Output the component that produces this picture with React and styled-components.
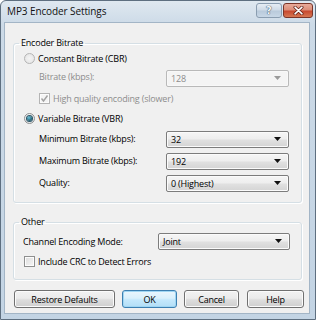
import React from 'react';
import styled, { createGlobalStyle, css } from 'styled-components';

const Global = createGlobalStyle`
  html, body { margin: 0; padding: 0; }
  body {
    width: 316px; height: 320px; overflow: hidden;
    font-family: "Open Sans", "Noto Sans", sans-serif;
    font-size: 9px; letter-spacing: -0.2px; color: #000;
  }
`;

const Window = styled.div`
  width: 316px; height: 320px; box-sizing: border-box;
  display: flex; flex-direction: column;
  background: linear-gradient(#dfe8f0, #ccdae7 24px, #c3d4e4 100%);
  border: 1px solid #5e6f80;
  border-radius: 6px 6px 0 0;
`;

const TitleBar = styled.div`
  height: 22px; display: flex; align-items: flex-start;
  padding-left: 6px;
`;

const TitleText = styled.div`
  font-size: 10px; letter-spacing: -0.1px; line-height: 21px; color: #111;
`;

const Controls = styled.div`
  margin-left: auto; margin-top: 2px; margin-right: 2px;
  display: flex; gap: 1px;
`;

const CapButton = styled.div`
  height: 15px; box-sizing: border-box; border-radius: 3px;
  display: flex; align-items: center; justify-content: center;
  ${p => p.$close ? css`
    width: 30px;
    border: 1px solid #7a3528;
    background: linear-gradient(#e9ab9a, #dc8e79 45%, #c7492f 55%, #d67752);
  ` : css`
    width: 26px;
    border: 1px solid #8a9db0;
    background: linear-gradient(#e6edf4, #cfdbe7 45%, #b9cadb 55%, #c8d7e6);
  `}
`;

const HelpGlyph = styled.span`
  font-family: "DejaVu Sans", sans-serif; font-weight: bold; font-size: 10px;
  color: #f4f7fa; text-shadow: 0 0 1px #34485c, 0 0 1px #34485c;
  line-height: 1; letter-spacing: 0;
`;

const Client = styled.div`
  flex: 1; margin: 0 6px 6px 4px;
  background: #f0f0f0;
  display: flex; flex-direction: column;
  box-shadow: 0 0 0 1px #a3b5c6;
`;

const Group = styled.fieldset`
  margin: ${p => p.$top}px 7px 0 8px;
  padding: ${p => p.$pt}px 0 8px 0;
  border: 1px solid #d5dfe5;
  border-radius: 3px;
  box-shadow: inset 1px 1px 0 #fff, 1px 1px 0 #fff;
  min-width: 0;
`;

const Legend = styled.legend`
  margin-left: 5px; padding: 0 2px;
  line-height: 10px;
`;

const Row = styled.div`
  height: ${p => p.$h || 20}px;
  display: flex; align-items: center;
  padding-left: ${p => p.$indent}px;
  padding-right: ${p => p.$right || 12}px;
  color: ${p => p.$disabled ? '#8d8d8d' : '#000'};
`;

const Label = styled.span`
  white-space: nowrap;
  margin-top: ${p => p.$dy || 0}px;
`;

const RadioCircle = styled.span`
  width: 11px; height: 11px; box-sizing: border-box; border-radius: 50%;
  margin-right: 3px; flex: none;
  border: 1px solid ${p => p.$disabled ? '#b4b4b4' : '#8e8f8f'};
  background: ${p => p.$disabled
    ? 'radial-gradient(circle at 50% 50%, #f4f4f4, #e2e2e2)'
    : 'radial-gradient(circle at 40% 35%, #ffffff, #dfe3e6 80%)'};
  display: flex; align-items: center; justify-content: center;
`;

const RadioDot = styled.span`
  width: 5px; height: 5px; border-radius: 50%;
  background: radial-gradient(circle at 40% 35%, #6bc3db, #1a5a6e 70%, #123f4f);
  box-shadow: 0 0 0 1px #2c5566;
`;

const CheckBox = styled.span`
  width: 11px; height: 11px; box-sizing: border-box; flex: none;
  margin-right: 3px;
  border: 1px solid ${p => p.$disabled ? '#b4b4b4' : '#8e8f8f'};
  background: ${p => p.$disabled ? '#f4f4f4' : 'linear-gradient(135deg, #dcdcdc, #f6f6f6)'};
  box-shadow: inset 0 0 0 1px #fcfcfc;
  display: flex; align-items: center; justify-content: center;
`;

const Select = styled.div`
  margin-left: auto;
  width: ${p => p.$w}px; height: 17px; box-sizing: border-box;
  border: 1px solid ${p => p.$disabled ? '#b9b9b9' : '#7c7c7c'};
  border-radius: 2px;
  background: ${p => p.$disabled
    ? '#f4f4f4'
    : 'linear-gradient(#f6f6f6, #eeeeee 45%, #e0e0e0 55%, #d4d4d4)'};
  box-shadow: inset 0 0 0 1px ${p => p.$disabled ? '#f8f8f8' : '#fbfbfb'};
  display: flex; align-items: center;
  padding: 0 7px 0 4px;
  color: ${p => p.$disabled ? '#8d8d8d' : '#000'};
`;

const SelectText = styled.span`
  flex: 1; white-space: nowrap;
`;

const ButtonRow = styled.div`
  display: flex; gap: 7px;
  margin-top: 10px; padding-left: 9px;
`;

const Button = styled.div`
  width: ${p => p.$w}px; height: 18px; box-sizing: border-box;
  border-radius: 3px;
  display: flex; align-items: center; justify-content: center;
  margin-left: ${p => p.$ml || 0}px;
  ${p => p.$default ? css`
    border: 1px solid #3c7fb1;
    background: linear-gradient(#eaf6fd, #d9f0fc 45%, #c4e8fc 55%, #b3def6);
    box-shadow: inset 0 0 0 1px #9fd6f3;
  ` : css`
    border: 1px solid #707070;
    background: linear-gradient(#f2f2f2, #ebebeb 45%, #dddddd 55%, #cfcfcf);
    box-shadow: inset 0 0 0 1px #fbfbfb;
  `}
`;

const Arrow = ({ disabled }) => (
  <svg width="7" height="4" viewBox="0 0 7 4">
    <path d="M0 0H7L3.5 4Z" fill={disabled ? '#9a9a9a' : '#111'} />
  </svg>
);

const Check = () => (
  <svg width="9" height="9" viewBox="0 0 9 9">
    <path d="M1.5 4.5L3.5 7L7.5 1.5" stroke="#a2a2a2" strokeWidth="1.4" fill="none" />
  </svg>
);

const CloseX = () => (
  <svg width="11" height="9" viewBox="0 0 11 9">
    <path d="M2 1.2L9 7.8M9 1.2L2 7.8" stroke="#5b1a10" strokeWidth="3" strokeLinecap="round" />
    <path d="M2 1.2L9 7.8M9 1.2L2 7.8" stroke="#fff" strokeWidth="1.6" strokeLinecap="round" />
  </svg>
);

export default function App() {
  return (
    <>
      <Global />
      <Window>
        <TitleBar>
          <TitleText>MP3 Encoder Settings</TitleText>
          <Controls>
            <CapButton><HelpGlyph>?</HelpGlyph></CapButton>
            <CapButton $close><CloseX /></CapButton>
          </Controls>
        </TitleBar>
        <Client>
          <Group $top={15} $pt={0}>
            <Legend>Encoder Bitrate</Legend>
            <Row $indent={10}>
              <RadioCircle $disabled />
              <Label>Constant Bitrate (CBR)</Label>
            </Row>
            <Row $indent={25} $disabled>
              <Label $dy={-3}>Bitrate (kbps):</Label>
              <Select $w={123} $disabled>
                <SelectText>128</SelectText>
                <Arrow disabled />
              </Select>
            </Row>
            <Row $indent={25} $disabled>
              <CheckBox $disabled><Check /></CheckBox>
              <Label>High quality encoding (slower)</Label>
            </Row>
            <Row $indent={10}>
              <RadioCircle><RadioDot /></RadioCircle>
              <Label>Variable Bitrate (VBR)</Label>
            </Row>
            <Row $indent={25} $h={22}>
              <Label $dy={-2}>Minimum Bitrate (kbps):</Label>
              <Select $w={123}>
                <SelectText>32</SelectText>
                <Arrow />
              </Select>
            </Row>
            <Row $indent={25} $h={22}>
              <Label $dy={-2}>Maximum Bitrate (kbps):</Label>
              <Select $w={123}>
                <SelectText>192</SelectText>
                <Arrow />
              </Select>
            </Row>
            <Row $indent={25} $h={22}>
              <Label $dy={-2}>Quality:</Label>
              <Select $w={123}>
                <SelectText>0 (Highest)</SelectText>
                <Arrow />
              </Select>
            </Row>
          </Group>
          <Group $top={14} $pt={4}>
            <Legend>Other</Legend>
            <Row $indent={9} $right={11}>
              <Label>Channel Encoding Mode:</Label>
              <Select $w={132}>
                <SelectText>Joint</SelectText>
                <Arrow />
              </Select>
            </Row>
            <Row $indent={10}>
              <CheckBox />
              <Label>Include CRC to Detect Errors</Label>
            </Row>
          </Group>
          <ButtonRow>
            <Button $w={101}>Restore Defaults</Button>
            <Button $w={55} $default>OK</Button>
            <Button $w={55}>Cancel</Button>
            <Button $w={57} $ml={1}>Help</Button>
          </ButtonRow>
        </Client>
      </Window>
    </>
  );
}
